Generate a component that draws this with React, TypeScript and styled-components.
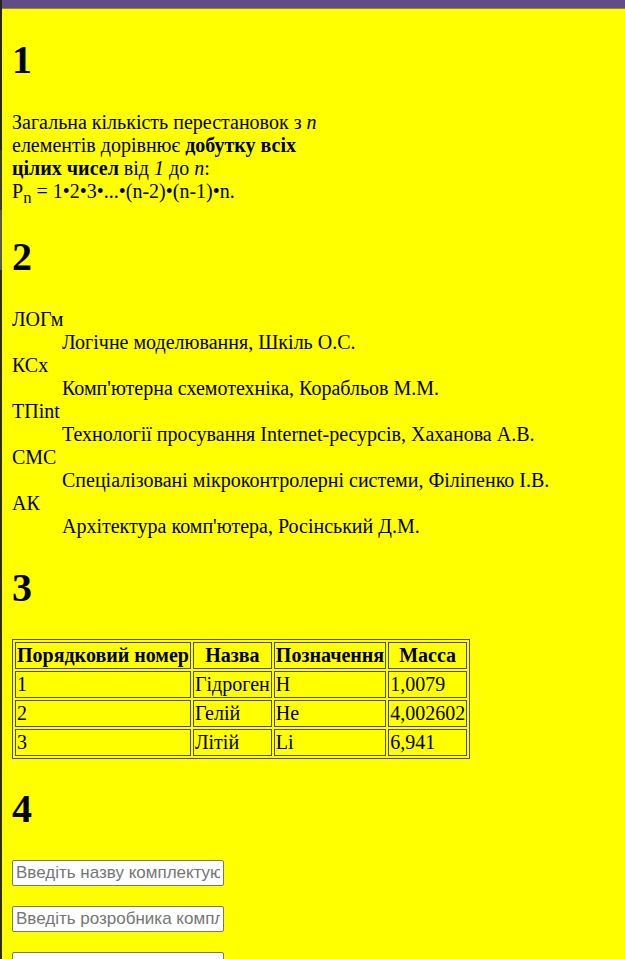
import React from "react";
import styled, { createGlobalStyle } from "styled-components";

const GlobalStyle = createGlobalStyle`
  body {
    margin: 0;
    background: #ffff00;
    color: #000;
    font-family: "Liberation Serif", "Times New Roman", serif;
    font-size: 20px;
    line-height: 23px;
  }
`;

const Page = styled.div`
  display: flex;
  min-height: 100vh;
`;

const EdgeStrip = styled.div`
  flex: 0 0 2px;
  background: linear-gradient(
    #26241f 0 150px,
    #3b3b36 150px 210px,
    #5a5a4c 210px 270px,
    #2c2c20 270px
  );
`;

const Column = styled.div`
  flex: 1;
  min-width: 0;
`;

const TopBar = styled.header`
  height: 8px;
  background: #604d87;
  border-bottom: 1px solid #a87a3a;
`;

const Content = styled.main`
  padding: 1px 10px 0;
`;

const Heading = styled.h1`
  margin: 0;
  padding: 27px 0 28px;
  font-size: 40px;
  line-height: 46px;
  font-weight: bold;
`;

const Formula = styled.p`
  margin: 0;
`;

const Subscript = styled.sub`
  line-height: 1;
`;

const Courses = styled.dl`
  margin: 0;
`;

const Course = styled.dd`
  margin: 0 0 0 50px;
`;

const Elements = styled.table`
  border: 1px solid #4a4a00;
  border-collapse: separate;
  border-spacing: 2px;
`;

const HeadCell = styled.th`
  padding: 1px;
  border: 1px solid #4a4a00;
  text-align: center;
`;

const Cell = styled.td`
  padding: 1px;
  border: 1px solid #4a4a00;
`;

const Form = styled.form`
  display: flex;
  flex-direction: column;
  align-items: flex-start;
  gap: 20px;
`;

const TextBox = styled.input`
  box-sizing: border-box;
  width: 212px;
  height: 26px;
  margin: 0;
  padding: 1px 3px;
  border: 1px solid #767676;
  border-radius: 2px;
  background: #fff;
  font-family: "Liberation Sans", Arial, sans-serif;
  font-size: 17px;

  &::placeholder {
    color: #757575;
  }
`;

const courses = [
  ["ЛОГм", "Логічне моделювання, Шкіль О.С."],
  ["КСх", "Комп'ютерна схемотехніка, Корабльов М.М."],
  ["ТПint", "Технології просування Internet-ресурсів, Хаханова А.В."],
  ["СМС", "Спеціалізовані мікроконтролерні системи, Філіпенко І.В."],
  ["АК", "Архітектура комп'ютера, Росінський Д.М."],
];

const columns = ["Порядковий номер", "Назва", "Позначення", "Масса"];

const elements = [
  ["1", "Гідроген", "H", "1,0079"],
  ["2", "Гелій", "He", "4,002602"],
  ["3", "Літій", "Li", "6,941"],
];

export default function App() {
  return (
    <Page>
      <GlobalStyle />
      <EdgeStrip />
      <Column>
        <TopBar />
        <Content>
          <Heading>1</Heading>
          <Formula>
            Загальна кількість перестановок з <i>n</i>
            <br />
            елементів дорівнює <b>добутку всіх</b>
            <br />
            <b>цілих чисел</b> від <i>1</i> до <i>n</i>:
            <br />P<Subscript>n</Subscript> = 1•2•3•...•(n-2)•(n-1)•n.
          </Formula>

          <Heading>2</Heading>
          <Courses>
            {courses.map(([code, title]) => (
              <React.Fragment key={code}>
                <dt>{code}</dt>
                <Course>{title}</Course>
              </React.Fragment>
            ))}
          </Courses>

          <Heading>3</Heading>
          <Elements>
            <thead>
              <tr>
                {columns.map((name) => (
                  <HeadCell key={name} scope="col">
                    {name}
                  </HeadCell>
                ))}
              </tr>
            </thead>
            <tbody>
              {elements.map((row) => (
                <tr key={row[0]}>
                  {row.map((value) => (
                    <Cell key={value}>{value}</Cell>
                  ))}
                </tr>
              ))}
            </tbody>
          </Elements>

          <Heading>4</Heading>
          <Form>
            <TextBox
              name="part"
              aria-label="Назва комплектуючого"
              placeholder="Введіть назву комплектуючого"
            />
            <TextBox
              name="vendor"
              aria-label="Розробник комплектуючого"
              placeholder="Введіть розробника комплектуючого"
            />
            <TextBox name="details" aria-label="Додаткові дані" />
          </Form>
        </Content>
      </Column>
    </Page>
  );
}
